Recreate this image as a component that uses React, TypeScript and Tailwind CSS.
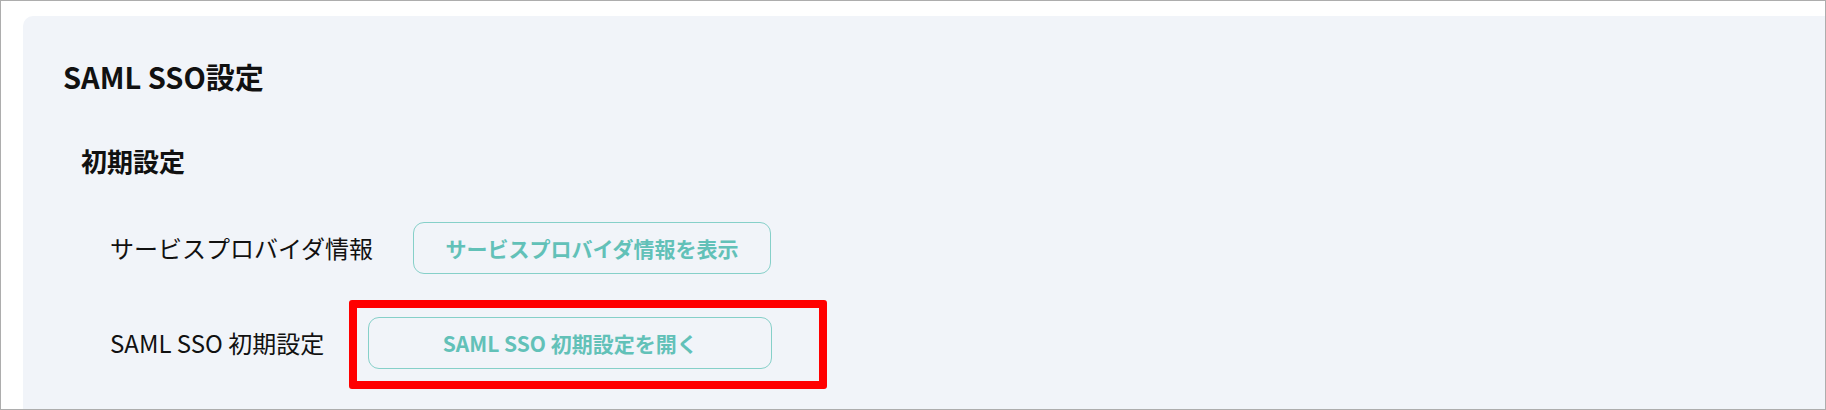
const font = { fontFamily: '"Noto Sans CJK JP", "Noto Sans", sans-serif' };

function OutlineButton({ label, width }: { label: string; width: string }) {
  return (
    <button
      className={`h-[52px] ${width} rounded-[11px] border-[1.5px] border-[#86d0c9] bg-transparent text-[21px] font-bold text-[#62c1b8] leading-none`}
    >
      {label}
    </button>
  );
}

export default function App() {
  return (
    <div
      className="flex h-[410px] w-[1826px] border border-[#adadad] bg-white pl-[22px] pt-[15px]"
      style={font}
    >
      <div className="flex-1 rounded-tl-[10px] bg-[#f1f4f9] pl-[40px] pt-[40px] text-[#111]">
        <h2 className="text-[29px] font-bold leading-[40px]">SAML SSO設定</h2>

        <h3 className="mt-[47px] pl-[18px] text-[26px] font-bold leading-[36px]">初期設定</h3>

        <div className="mt-[43px] flex flex-col gap-[43px] pl-[47px]">
          <div className="flex items-center gap-10">
            <span className="text-[24px] leading-none">サービスプロバイダ情報</span>
            <OutlineButton label="サービスプロバイダ情報を表示" width="w-[358px]" />
          </div>
          <div className="flex items-center gap-[44px]">
            <span className="text-[24px] leading-none">SAML SSO 初期設定</span>
            <div className="relative">
              <OutlineButton label="SAML SSO 初期設定を開く" width="w-[404px]" />
              <span className="pointer-events-none absolute -top-[17px] -bottom-[20px] -left-[19px] -right-[55px] rounded-[3px] border-[8px] border-[#ff0000]" />
            </div>
          </div>
        </div>
      </div>
    </div>
  );
}
